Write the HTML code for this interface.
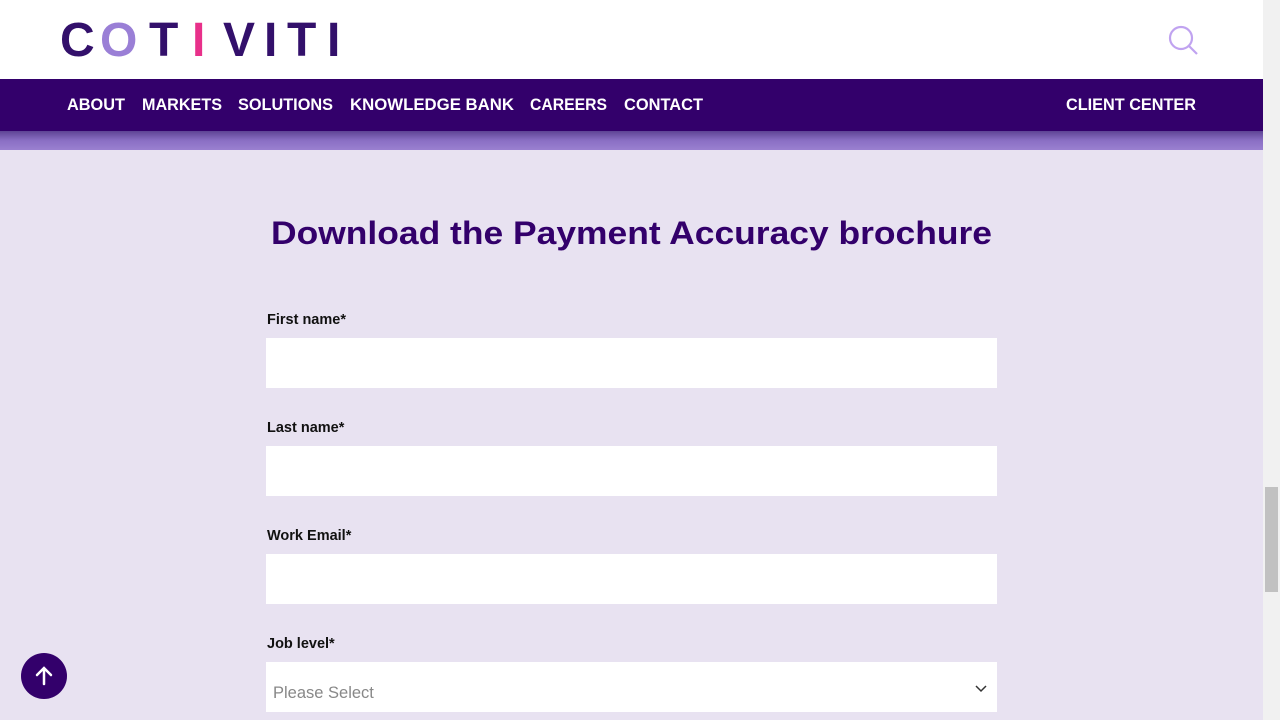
<!DOCTYPE html>
<html><head><meta charset="utf-8"><style>
*{margin:0;padding:0;box-sizing:border-box}
body{width:1280px;height:720px;overflow:hidden;background:#e8e2f1;font-family:"Liberation Sans",sans-serif;position:relative}
.hdr{position:absolute;left:0;top:0;width:1263px;height:79px;background:#fff}
.nav{position:absolute;left:0;top:79px;width:1263px;height:52px;background:#33006b;z-index:2}
.band{position:absolute;left:0;top:131px;width:1263px;height:19px;background:linear-gradient(#5e4494,#8a6fc4 50%,#9a80d0)}
.sb{position:absolute;left:1263px;top:0;width:17px;height:720px;background:#f1f1f1}
.thumb{position:absolute;left:1265px;top:487px;width:13px;height:105px;background:#c1c1c1}
svg text{font-family:"Liberation Sans",sans-serif}
.lbl{position:absolute;left:267px;font-size:14.5px;font-weight:bold;color:#111}
.inp{position:absolute;left:266px;width:731px;height:50px;background:#fff}
.top{position:absolute;left:21px;top:653px;width:46px;height:46px;border-radius:50%;background:#33006b}
</style></head><body>
<div class="hdr">
<svg width="400" height="79" style="position:absolute;left:0;top:0">
<g font-size="48" font-weight="bold">
<text x="60" y="56" fill="#33106b">C</text>
<text x="100" y="56" fill="#9a7fd6">O</text>
<text x="149" y="56" fill="#33106b">T</text>
<text x="192" y="56" fill="#e8308a">I</text>
<text x="223" y="56" fill="#33106b">V</text>
<text x="264" y="56" fill="#33106b">I</text>
<text x="287" y="56" fill="#33106b">T</text>
<text x="327" y="56" fill="#33106b">I</text>
</g></svg>
<svg width="40" height="40" style="position:absolute;left:1165px;top:22px"><circle cx="16" cy="16" r="11" fill="none" stroke="#c0a3f0" stroke-width="2.2"/><line x1="24" y1="24" x2="32" y2="32" stroke="#c0a3f0" stroke-width="2.2"/></svg>
</div>
<div class="nav">
<svg width="1263" height="52"><g fill="#fff" font-size="16.5" font-weight="bold">
<text x="67" y="31" textLength="58" lengthAdjust="spacingAndGlyphs">ABOUT</text>
<text x="142" y="31" textLength="80" lengthAdjust="spacingAndGlyphs">MARKETS</text>
<text x="238" y="31" textLength="95" lengthAdjust="spacingAndGlyphs">SOLUTIONS</text>
<text x="350" y="31" textLength="164" lengthAdjust="spacingAndGlyphs">KNOWLEDGE BANK</text>
<text x="530" y="31" textLength="77" lengthAdjust="spacingAndGlyphs">CAREERS</text>
<text x="624" y="31" textLength="79" lengthAdjust="spacingAndGlyphs">CONTACT</text>
<text x="1066" y="31" textLength="130" lengthAdjust="spacingAndGlyphs">CLIENT CENTER</text>
</g></svg>
</div>
<div class="band"></div>
<svg width="1263" height="60" style="position:absolute;left:0;top:205px"><text x="271" y="39" font-size="32" font-weight="bold" fill="#33006b" textLength="721" lengthAdjust="spacingAndGlyphs">Download the Payment Accuracy brochure</text></svg>
<div class="lbl" style="top:312px">First name*</div>
<div class="inp" style="top:338px"></div>
<div class="lbl" style="top:420px">Last name*</div>
<div class="inp" style="top:446px"></div>
<div class="lbl" style="top:528px">Work Email*</div>
<div class="inp" style="top:554px"></div>
<div class="lbl" style="top:636px">Job level*</div>
<div class="inp" style="top:662px"><span style="position:absolute;left:7px;top:22px;font-size:16.5px;color:#888">Please Select</span>
<svg width="14" height="10" style="position:absolute;left:708px;top:22px"><path d="M2 2 L7 7 L12 2" fill="none" stroke="#333" stroke-width="1.5"/></svg></div>
<div class="top"><svg width="46" height="46"><path d="M23 31 V15 M16 22 L23 15 L30 22" fill="none" stroke="#fff" stroke-width="2.5" stroke-linecap="round"/></svg></div>
<div class="sb"></div><div class="thumb"></div>
</body></html>
